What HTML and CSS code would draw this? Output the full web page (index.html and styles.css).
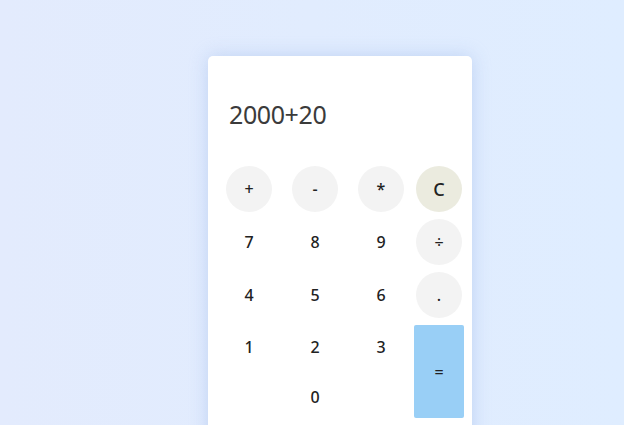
FILE: index.html
```html
<!DOCTYPE html>
<html>
<head>
<meta charset="utf-8">
<link rel="stylesheet" href="styles.css">
</head>
<body>
<div class="calc">
  <div class="display">2000+20</div>
  <div class="keys">
    <button class="key op">+</button>
    <button class="key op">-</button>
    <button class="key op">*</button>
    <button class="key clear">C</button>
    <button class="key">7</button>
    <button class="key">8</button>
    <button class="key">9</button>
    <button class="key op">÷</button>
    <button class="key">4</button>
    <button class="key">5</button>
    <button class="key">6</button>
    <button class="key op">.</button>
    <button class="key">1</button>
    <button class="key">2</button>
    <button class="key">3</button>
    <button class="key equals">=</button>
    <button class="key zero">0</button>
  </div>
</div>
</body>
</html>
```
FILE: styles.css
```css
html, body {
  margin: 0;
  height: 100%;
  overflow: hidden;
}
body {
  background: linear-gradient(90deg, #e3ebfd 0%, #dfedff 100%);
  font-family: "Noto Sans", "Open Sans", sans-serif;
  padding-top: 56px;
  box-sizing: border-box;
}
.calc {
  margin-left: 208px;
  width: 264px;
  height: 400px;
  background: #fff;
  border-radius: 5px;
  box-shadow: 0 0 18px rgba(150, 180, 230, 0.45);
}
.display {
  height: 110px;
  padding-left: 21px;
  padding-top: 41px;
  box-sizing: border-box;
  font-size: 25px;
  letter-spacing: -0.4px;
  color: #3b3b3b;
  line-height: 34px;
}
.keys {
  display: grid;
  grid-template-columns: 66px 66px 66px 50px;
  grid-template-rows: 46px 46px 46px 43px 43px;
  row-gap: 7px;
  padding-left: 8px;
  justify-items: center;
  align-items: center;
}
.key {
  border: none;
  background: transparent;
  font-family: inherit;
  font-size: 16px;
  font-weight: 500;
  color: #222;
  width: 46px;
  height: 46px;
  padding: 0;
  border-radius: 50%;
}
.op { background: #f3f3f3; }
.clear {
  background: #ebebdf;
  font-size: 18px;
}
.equals {
  grid-column: 4;
  grid-row: 4 / span 2;
  width: 50px;
  height: 93px;
  border-radius: 2px;
  background: #99cff6;
}
.zero {
  grid-column: 2;
  grid-row: 5;
}
```
